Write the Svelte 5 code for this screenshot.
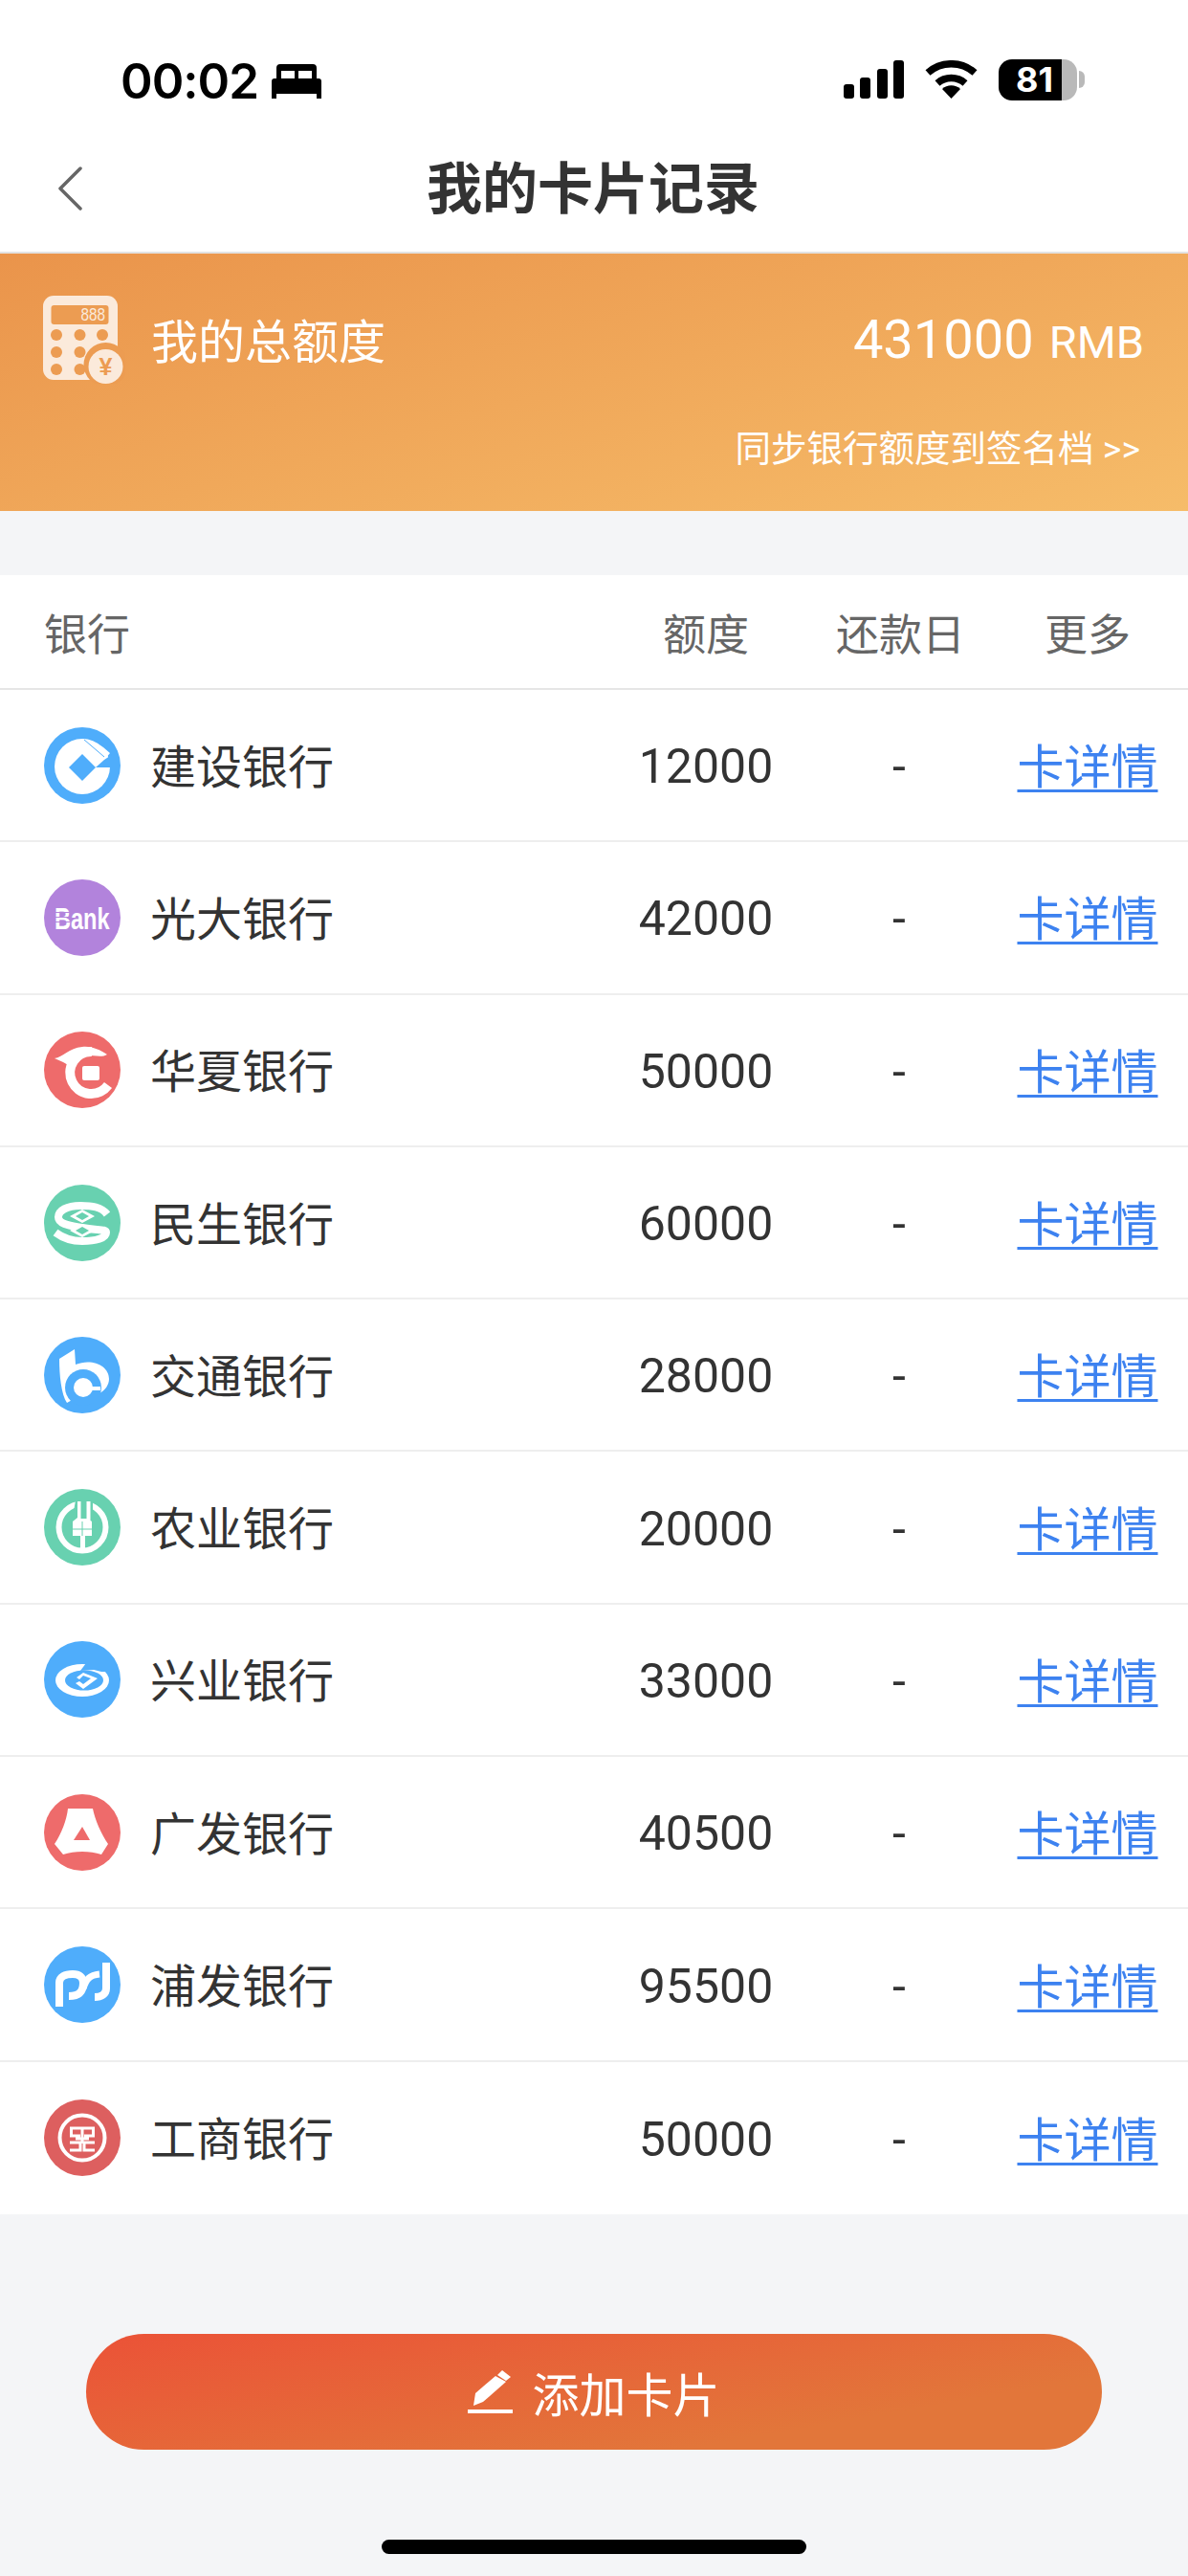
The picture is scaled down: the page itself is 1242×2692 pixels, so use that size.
<script>
  const banks = [
    { name: '建设银行', amount: 12000, icon: 'ccb', color: '#4fadfb' },
    { name: '光大银行', amount: 42000, icon: 'ceb', color: '#b283dc' },
    { name: '华夏银行', amount: 50000, icon: 'hxb', color: '#ee6b6b' },
    { name: '民生银行', amount: 60000, icon: 'cmbc', color: '#68d1b0' },
    { name: '交通银行', amount: 28000, icon: 'bocom', color: '#4fadfb' },
    { name: '农业银行', amount: 20000, icon: 'abc', color: '#68d1b0' },
    { name: '兴业银行', amount: 33000, icon: 'cib', color: '#4fadfb' },
    { name: '广发银行', amount: 40500, icon: 'cgb', color: '#ee6b6b' },
    { name: '浦发银行', amount: 95500, icon: 'spdb', color: '#4fadfb' },
    { name: '工商银行', amount: 50000, icon: 'icbc', color: '#dd5f5f' }
  ];
</script>

<div class="page">
  <div class="status">
    <div class="status-left">
      <span class="time">00:02</span>
      <svg class="bed" width="52" height="36" viewBox="0 0 52 36">
        <path d="M5 15V4a4 4 0 0 1 4-4h34a4 4 0 0 1 4 4v11h-5V7H28v8h-4V7H10v8zM3 15h46a3 3 0 0 1 3 3v18h-5v-5H5v5H0V18a3 3 0 0 1 3-3z" fill="#000"/>
      </svg>
    </div>
    <div class="status-right">
      <svg width="63" height="40" viewBox="0 0 63 40">
        <rect x="0" y="25" width="11" height="15" rx="3" /><rect x="17" y="18" width="11" height="22" rx="3" /><rect x="35" y="9" width="11" height="31" rx="3" /><rect x="52" y="0" width="11" height="40" rx="3" />
      </svg>
      <svg width="55" height="40" viewBox="0 0 55 40">
        <path d="M3 13A37 37 0 0 1 52 13M13 24A22 22 0 0 1 42 24" fill="none" stroke="#000" stroke-width="7.5"/>
        <path d="M27.500 40L18 30A14 14 0 0 1 37 30Z" fill="#000"/>
      </svg>
      <div class="battery-wrap">
        <div class="battery">81</div>
        <span class="tip"></span>
      </div>
    </div>
  </div>

  <div class="nav">
    <svg class="back" width="26" height="46" viewBox="0 0 26 46">
      <path d="M24 2L3 23L24 44" fill="none" stroke="#666" stroke-width="3.5" stroke-linecap="round" stroke-linejoin="round"/>
    </svg>
    <div class="title">我的卡片记录</div>
    <span></span>
  </div>

  <div class="banner">
    <div class="banner-top">
      <svg class="calc" width="86" height="92" viewBox="0 0 86 92">
        <rect width="78" height="88" rx="11" fill="#fbeadb"/>
        <rect x="8.5" y="10" width="60" height="20" rx="3" fill="#ec9c52"/>
        <text transform="translate(65 26) scale(.85 1)" text-anchor="end" class="calc-digits">888</text>
        <g fill="#ec9c52">
          <circle cx="14" cy="41" r="6"/><circle cx="38.5" cy="41" r="6"/><circle cx="62" cy="41" r="6"/>
          <circle cx="14" cy="59" r="6"/><circle cx="38.5" cy="59" r="6"/>
          <circle cx="14" cy="77" r="6"/><circle cx="38.5" cy="77" r="6"/>
          <circle cx="65.5" cy="72" r="23"/>
        </g>
        <circle cx="65.5" cy="74" r="18" fill="#fbeadb"/>
        <text x="65.5" y="83" text-anchor="middle" class="coin">¥</text>
      </svg>
      <span class="banner-label">我的总额度</span>
      <span class="total">431000<span class="unit">RMB</span></span>
    </div>
    <div class="sync">同步银行额度到签名档 &gt;&gt;</div>
  </div>

  <div class="table">
    <div class="grid head">
      <div class="bank-head">银行</div>
      <div>额度</div>
      <div class="repay-head">还款日</div>
      <div>更多</div>
    </div>
    {#each banks as bank}
      <div class="grid row">
        <div class="bank">
          <svg width="80" height="80" viewBox="0 0 80 80">
            <circle cx="40" cy="40" r="40" fill={bank.color}/>
            {#if bank.icon === 'ccb'}
              <circle cx="40" cy="41" r="29" fill="#fff"/>
              <path d="M40 12Q56 14 69 27L64 33Q52 20 40 15Z" fill="#fff"/>
              <path d="M54 42L72 42L72 28L63 34Z" fill={bank.color}/>
              <path d="M42 13L63 31" stroke={bank.color} stroke-width="1"/>
              <path d="M40 28L26 42L40 56L54 42Z" fill={bank.color}/>
            {:else if bank.icon === 'ceb'}
              <text transform="translate(11 52) scale(.76 1)" class="bank-word">Bank</text>
              <path d="M11 34.500H27M11 39.500H27M11 44.500H27" stroke={bank.color} stroke-width="1"/>
            {:else if bank.icon === 'hxb'}
              <path d="M50 21A22 22 0 1 0 67 56" fill="none" stroke="#fff" stroke-width="10"/>
              <path d="M11 28C20 27 26 17 40 16C50 15 58 19 66 24C60 28 50 24 42 25C34 26 30 30 27 36L20 32Z" fill="#fff"/>
              <rect x="40" y="36" width="18" height="15" rx="2" fill="#fff"/>
            {:else if bank.icon === 'cmbc'}
              <path d="M66 31C60 23 50 22 38 22C24 22 15 27 15 34C15 42 30 43 40 45C55 48 65 46 65 50C65 56 54 59 40 59C28 59 20 56 12 50" fill="none" stroke="#fff" stroke-width="8"/>
              <path d="M27 33L40 26L53 33L40 40ZM27 48L40 41L53 48L40 55Z" fill="#fff"/>
              <path d="M33 33L40 29L47 33L40 37ZM33 48L40 44L47 48L40 52Z" fill={bank.color}/>
            {:else if bank.icon === 'bocom'}
              <path d="M16 23L32 13L33 29C50 22 68 30 68 44C68 50 64 56 58 59L40 60L24 69C18 60 16 40 16 23Z" fill="#fff"/>
              <circle cx="41" cy="53" r="19" fill={bank.color}/>
              <circle cx="41" cy="53" r="10" fill="#fff"/>
              <rect x="46" y="52" width="13" height="4" fill="#fff"/>
            {:else if bank.icon === 'abc'}
              <circle cx="40" cy="40" r="24.5" fill="none" stroke="#fff" stroke-width="6"/>
              <path d="M33 12H51V34H29Z" fill={bank.color}/>
              <path d="M35 13H38.500V31H44.500V13H48.500V33L50 34H30L35 30Z" fill="#fff"/>
              <path d="M30 34H50V49H43V66H38V49H30Z" fill="#fff"/>
              <path d="M30 42H50M40 34V49" stroke={bank.color} stroke-width="1"/>
            {:else if bank.icon === 'cib'}
              <ellipse cx="40" cy="41" rx="28" ry="17" fill="#fff"/>
              <ellipse cx="42" cy="41" rx="20" ry="10.500" fill={bank.color}/>
              <path d="M44 23L72 23L72 32L60 32L52 30L38 31Z" fill={bank.color}/>
              <path d="M34 38L41 33L56 39L41 50L33 44L37 42L41 45L49 39L41 36L37 40Z" fill="#fff"/>
            {:else if bank.icon === 'cgb'}
              <path d="M25 15H51C53 26 60 42 67 52L60 63C48 59 32 59 20 63L11 52C18 42 24 26 25 15Z" fill="#fff"/>
              <path d="M40 34L48 48H31Z" fill={bank.color}/>
            {:else if bank.icon === 'spdb'}
              <g fill="none" stroke="#fff" stroke-width="8">
                <path d="M16 63V38C16 32 22 29 30 29C37 29 41 32 41 38C41 46 38 52 26 52"/>
                <path d="M41 44C44 34 48 30 58 29" stroke-width="7"/>
                <path d="M65 17V44C65 50 60 53 53 53"/>
              </g>
            {:else if bank.icon === 'icbc'}
              <circle cx="40" cy="40" r="23.500" fill="none" stroke="#fff" stroke-width="4"/>
              <path d="M27 30H53M28.500 30V38H38M51.500 30V38H42M40 30V36M33 41H47M40 36V46M27 45H38V53H27M53 45H42V53H53" fill="none" stroke="#fff" stroke-width="3"/>
            {/if}
          </svg>
          <span class="bank-name">{bank.name}</span>
        </div>
        <div class="num">{bank.amount}</div>
        <div class="num">-</div>
        <a class="link" href="#detail">卡详情</a>
      </div>
    {/each}
  </div>

  <div class="footer">
    <button class="add" type="button">
      <svg width="47" height="45" viewBox="0 0 47 45">
        <path d="M6 37L8 24L29 6L40 12L16 33Z" fill="#fff"/>
        <path d="M36 0L45 7L40 11L31 5Z" fill="#fff"/>
        <rect y="41" width="47" height="4" fill="#fff"/>
      </svg>
      <span>添加卡片</span>
    </button>
    <div class="home"></div>
  </div>
</div>

<style>
  :global(body) {
    margin: 0;
    background: #f4f5f7;
  }
  .page {
    width: 1242px;
    height: 2692px;
    background: #f4f5f7;
    font-family: Roboto, "Noto Sans CJK SC", sans-serif;
    color: #333;
    display: flex;
    flex-direction: column;
    overflow: hidden;
  }
  .status {
    height: 140px;
    box-sizing: border-box;
    background: #fff;
    display: flex;
    justify-content: space-between;
    align-items: flex-start;
    padding: 62px 108px 0 126px;
  }
  .status-left {
    display: flex;
    align-items: center;
    gap: 14px;
    height: 42px;
  }
  .time {
    font-family: Inter, sans-serif;
    font-weight: 600;
    font-size: 51px;
    line-height: 42px;
    color: #000;
    letter-spacing: -1px;
    padding-top: 3px;
  }
  .bed {
    margin-top: 4px;
  }
  .status-right {
    display: flex;
    align-items: center;
    gap: 22px;
    height: 42px;
  }
  .battery-wrap {
    display: flex;
    align-items: center;
    gap: 2px;
  }
  .battery {
    width: 82px;
    height: 43px;
    box-sizing: border-box;
    padding-left: 18px;
    border-radius: 14px;
    background: linear-gradient(90deg, #000 80%, #b9b9b9 80%);
    color: #fff;
    font-family: Inter, sans-serif;
    font-weight: 700;
    font-size: 36px;
    line-height: 43px;
  }
  .tip {
    width: 6px;
    height: 18px;
    border-radius: 0 6px 6px 0;
    background: #b9b9b9;
  }
  .nav {
    height: 125px;
    box-sizing: border-box;
    background: #fff;
    border-bottom: 2px solid #e2e2e2;
    display: grid;
    grid-template-columns: 1fr auto 1fr;
    align-items: center;
    padding: 0 62px 10px 60px;
  }
  .title {
    font-size: 58px;
    line-height: 70px;
    font-weight: 700;
    color: #333;
    padding-top: 3px;
  }
  .banner {
    height: 269px;
    box-sizing: border-box;
    background: linear-gradient(165deg, #ea944b 0%, #f6bc69 100%);
    color: #fff;
    padding: 44px 46px 0 45px;
  }
  .banner-top {
    display: flex;
    align-items: center;
    height: 92px;
  }
  .calc-digits {
    font-family: "Liberation Sans", sans-serif;
    font-size: 18px;
    fill: #fbeadb;
  }
  .coin {
    font-family: "Liberation Sans", sans-serif;
    font-size: 25px;
    font-weight: 700;
    fill: #ec9c52;
  }
  .banner-label {
    font-size: 49px;
    margin-left: 27px;
    font-weight: 400;
    padding-bottom: 3px;
  }
  .total {
    margin-left: auto;
    font-size: 56px;
    font-weight: 400;
    display: flex;
    align-items: baseline;
    gap: 16px;
  }
  .unit {
    font-size: 47px;
  }
  .sync {
    text-align: right;
    font-size: 37.5px;
    line-height: 44px;
    font-weight: 400;
    padding-right: 4px;
    margin-top: 46px;
  }
  .table {
    margin-top: 67px;
    background: #fff;
  }
  .grid {
    display: grid;
    grid-template-columns: 634px 208px 196px 198px;
    padding-right: 6px;
    align-items: center;
    text-align: center;
    box-sizing: border-box;
  }
  .head {
    height: 120px;
    border-bottom: 2px solid #e6e6e6;
    font-size: 45px;
    color: #666;
  }
  .bank-head {
    text-align: left;
    padding-left: 46px;
  }
  .repay-head {
    padding-left: 3px;
  }
  .row {
    height: 159.3px;
    border-bottom: 2px solid #eeeeee;
  }
  .row:last-child {
    border-bottom: none;
  }
  .bank {
    display: flex;
    align-items: center;
    gap: 31px;
    padding-left: 46px;
    font-size: 48px;
    color: #333;
  }
  .bank-name {
    padding-bottom: 4px;
  }
  .bank-word {
    font-family: "Liberation Sans", sans-serif;
    font-weight: 700;
    font-size: 31px;
    fill: #fff;
  }
  .num {
    font-size: 50px;
    color: #333;
    padding-top: 3px;
  }
  .link {
    font-size: 49px;
    color: #3d82f0;
    text-decoration: underline;
    text-decoration-thickness: 3px;
    text-underline-offset: 6px;
    margin-bottom: 4px;
  }
  .footer {
    display: flex;
    flex-direction: column;
    align-items: center;
    margin-top: 125px;
  }
  .add {
    width: 1062px;
    height: 121px;
    border: none;
    border-radius: 61px;
    background: linear-gradient(170deg, #eb5237 0%, #e2763a 75%);
    color: #fff;
    font-family: inherit;
    font-size: 49px;
    display: flex;
    align-items: center;
    justify-content: center;
    gap: 20px;
    padding: 0;
  }
  .home {
    width: 444px;
    height: 15px;
    border-radius: 8px;
    background: #000;
    margin-top: 94px;
  }
</style>
